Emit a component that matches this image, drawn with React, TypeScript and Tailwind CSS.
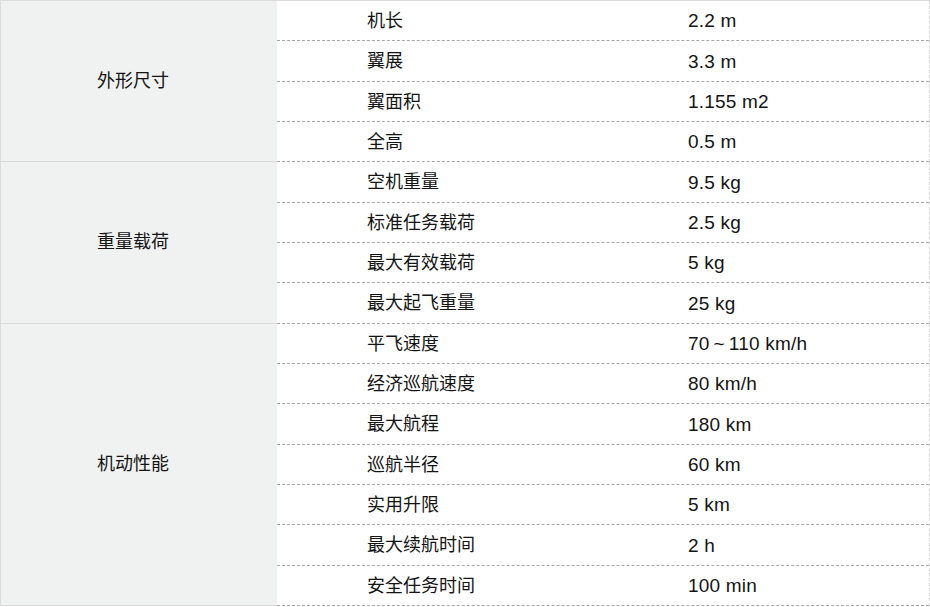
import React from "react";

type Row = [string, string];
type Group = { title: string; rows: Row[] };

const groups: Group[] = [
  {
    title: "外形尺寸",
    rows: [
      ["机长", "2.2 m"],
      ["翼展", "3.3 m"],
      ["翼面积", "1.155 m2"],
      ["全高", "0.5 m"],
    ],
  },
  {
    title: "重量载荷",
    rows: [
      ["空机重量", "9.5 kg"],
      ["标准任务载荷", "2.5 kg"],
      ["最大有效载荷", "5 kg"],
      ["最大起飞重量", "25 kg"],
    ],
  },
  {
    title: "机动性能",
    rows: [
      ["平飞速度", "70\u2009~\u2009110 km/h"],
      ["经济巡航速度", "80 km/h"],
      ["最大航程", "180 km"],
      ["巡航半径", "60 km"],
      ["实用升限", "5 km"],
      ["最大续航时间", "2 h"],
      ["安全任务时间", "100 min"],
    ],
  },
];

export default function App() {
  return (
    <div
      className="w-[930px] border-t border-l border-[#dcdcdc] bg-white text-[18px] text-[#141414]"
      style={{ fontFamily: '"Liberation Sans", "Noto Sans CJK SC", sans-serif' }}
    >
      {groups.map((g) => (
        <div key={g.title} className="flex">
          <div className="flex w-[276px] shrink-0 items-center border-b border-[#d9d9d9] bg-[#f0f1f1] pt-px pl-[96px]">
            {g.title}
          </div>
          <div className="flex-1 border-r border-dashed border-r-[#d6d6d6]">
            {g.rows.map(([k, v]) => (
              <div
                key={k}
                className="flex h-[40.33px] items-center border-b border-dashed border-[#a8a8a8] pt-[2px]"
              >
                <span className="w-[411px] shrink-0 pl-[90px]">{k}</span>
                <span className="text-[19px] tracking-[0.2px]">{v}</span>
              </div>
            ))}
          </div>
        </div>
      ))}
    </div>
  );
}
